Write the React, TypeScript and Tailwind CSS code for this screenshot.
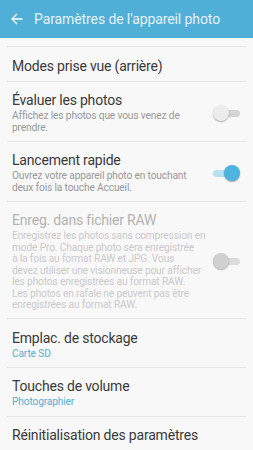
import React from 'react';

type Row = {
  title: string;
  sub?: string[];
  subBlue?: boolean;
  toggle?: 'on' | 'off' | 'disabled';
  disabled?: boolean;
  pad: string;
};

const rows: Row[] = [
  { title: 'Modes prise vue (arrière)', pad: 'pt-[11px] pb-[7px]' },
  {
    title: 'Évaluer les photos',
    sub: ['Affichez les photos que vous venez de', 'prendre.'],
    toggle: 'off',
    pad: 'pt-[10px] pb-[7px]',
  },
  {
    title: 'Lancement rapide',
    sub: ['Ouvrez votre appareil photo en touchant', 'deux fois la touche Accueil.'],
    toggle: 'on',
    pad: 'pt-[10px] pb-[7px]',
  },
  {
    title: 'Enreg. dans fichier RAW',
    sub: [
      'Enregistrez les photos sans compression en',
      'mode Pro. Chaque photo sera enregistrée',
      'à la fois au format RAW et JPG. Vous',
      'devez utiliser une visionneuse pour afficher',
      'les photos enregistrées au format RAW.',
      'Les photos en rafale ne peuvent pas être',
      'enregistrées au format RAW.',
    ],
    toggle: 'disabled',
    disabled: true,
    pad: 'pt-[10px] pb-[7.5px]',
  },
  { title: 'Emplac. de stockage', sub: ['Carte SD'], subBlue: true, pad: 'pt-[11px] pb-[7px]' },
  { title: 'Touches de volume', sub: ['Photographier'], subBlue: true, pad: 'pt-[10px] pb-[8px]' },
  { title: 'Réinitialisation des paramètres', pad: 'pt-[10px] pb-[10px]' },
];

function Toggle({ state }: { state: 'on' | 'off' | 'disabled' }) {
  if (state === 'on') {
    return (
      <div className="relative w-[27px] h-[16px]">
        <div className="absolute left-0 top-[4.5px] w-[22px] h-[7px] rounded-full bg-[#b6e1f1]" />
        <div className="absolute right-0 top-0 w-[16px] h-[16px] rounded-full bg-[#4cb4de] shadow-[0_1px_1.5px_rgba(0,0,0,0.35)]" />
      </div>
    );
  }
  const thumb = state === 'off' ? 'bg-[#ececec]' : 'bg-[#d0d0d0]';
  const track = state === 'off' ? 'bg-[#d4d4d4]' : 'bg-[#dcdcdc]';
  return (
    <div className="relative w-[27px] h-[16px]">
      <div className={`absolute right-0 top-[4.5px] w-[22px] h-[7px] rounded-full ${track}`} />
      <div className={`absolute left-0 top-0 w-[16px] h-[16px] rounded-full ${thumb} shadow-[0_1px_1.5px_rgba(0,0,0,0.3)]`} />
    </div>
  );
}

export default function App() {
  return (
    <div
      className="w-[253px] h-[450px] overflow-hidden bg-[#f8f8f8]"
      style={{ fontFamily: 'Roboto, "Noto Sans", sans-serif' }}
    >
      {/* Header */}
      <div className="h-[38px] bg-[#4fafd6] flex items-center pl-[11px]">
        <svg width="12" height="12" viewBox="0 0 24 24" fill="none" stroke="#ffffff" strokeWidth="2.6" strokeLinecap="square">
          <path d="M22 12H3M11 3l-9 9 9 9" />
        </svg>
        <span className="ml-[11px] text-[14px] tracking-[-0.1px] text-[#e4f2f9] leading-none">
          Paramètres de l'appareil photo
        </span>
      </div>

      <div className="h-[8px]" />

      {rows.map((r, i) => (
        <div key={i}>
          <div className="mx-[7px] border-t border-[#e6e6e6]" />
          <div className={`flex items-center pl-[12px] pr-[13px] ${r.pad}`}>
            <div className="flex-1 min-w-0">
              <div
                className={`text-[14px] tracking-[-0.2px] leading-[16px] whitespace-nowrap ${
                  r.disabled ? 'text-[#b3b3b3]' : 'text-[#3a3a3a]'
                }`}
              >
                {r.title}
              </div>
              {r.sub && (
                <div
                  className={`mt-[2px] text-[10.2px] tracking-[-0.15px] whitespace-nowrap ${
                    r.disabled ? 'leading-[11.5px]' : 'leading-[12px]'
                  } ${r.subBlue ? 'text-[#5aaed5]' : r.disabled ? 'text-[#cacaca]' : 'text-[#999999]'}`}
                >
                  {r.sub.map((line, j) => (
                    <div key={j}>{line}</div>
                  ))}
                </div>
              )}
            </div>
            {r.toggle && (
              <div className="ml-2 shrink-0">
                <Toggle state={r.toggle} />
              </div>
            )}
          </div>
        </div>
      ))}
    </div>
  );
}
